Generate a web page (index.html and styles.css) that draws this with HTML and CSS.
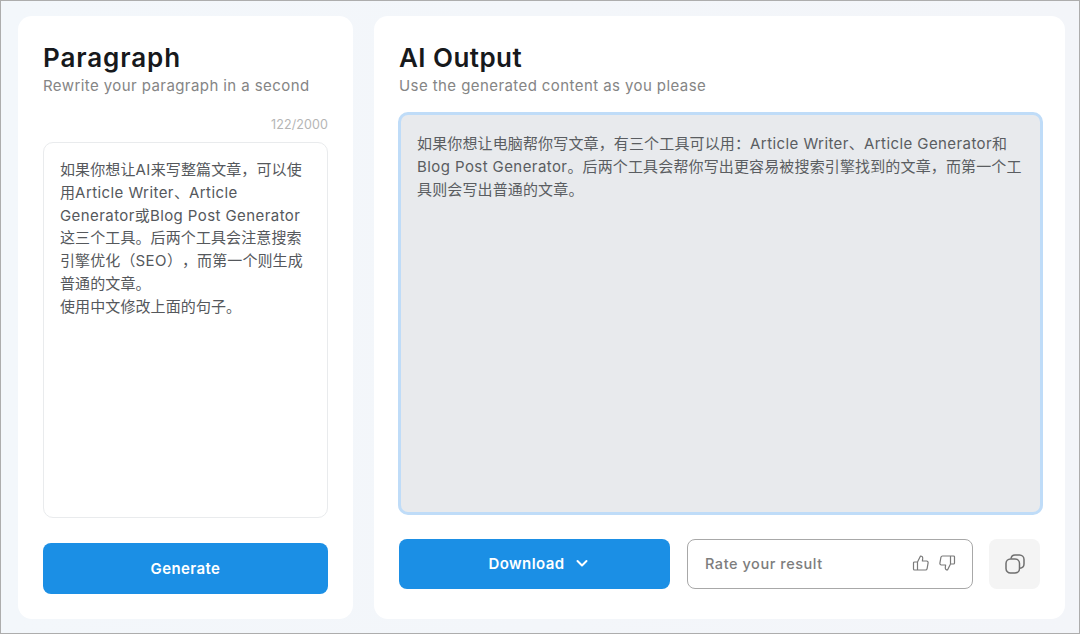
FILE: index.html
```html
<!DOCTYPE html>
<html lang="en">
<head>
<meta charset="utf-8">
<title>Paragraph Rewriter</title>
<link rel="stylesheet" href="styles.css">
</head>
<body>
<main class="frame">
  <section class="card card-left">
    <h1 class="title title-para">Paragraph</h1>
    <p class="subtitle">Rewrite your paragraph in a second</p>
    <div class="count">122/2000</div>
    <div class="input-box">如果你想让<span class="lat">AI</span>来写整篇文章，可以使用<span class="lat">Article Writer</span>、<span class="lat">Article Generator</span>或<span class="lat">Blog Post Generator</span>这三个工具。后两个工具会注意搜索引擎优化（<span class="lat">SEO</span>），而第一个则生成普通的文章。<br>使用中文修改上面的句子。</div>
    <button class="btn btn-generate">Generate</button>
  </section>
  <section class="card card-right">
    <h1 class="title title-output">AI Output</h1>
    <p class="subtitle">Use the generated content as you please</p>
    <div class="output-box">如果你想让电脑帮你写文章，有三个工具可以用：<span class="lat">Article Writer</span>、<span class="lat">Article Generator</span>和<span class="lat">Blog Post Generator</span>。后两个工具会帮你写出更容易被搜索引擎找到的文章，而第一个工具则会写出普通的文章。</div>
    <div class="actions">
      <button class="btn btn-download">Download
        <svg class="chev" width="14" height="14" viewBox="0 0 14 14" fill="none" stroke="#fff" stroke-width="2" stroke-linecap="round" stroke-linejoin="round"><path d="M2.500 5l4.500 4.500L11.500 5"/></svg>
      </button>
      <div class="rate">
        <span class="rate-label">Rate your result</span>
        <span class="rate-icons">
          <svg width="18" height="18" viewBox="0 0 18 18" fill="none" stroke="#7a7a7a" stroke-width="1.200" stroke-linejoin="round"><path d="M5.500 8h-3a1 1 0 0 0-1 1v6a1 1 0 0 0 1 1h3zM5.500 8l3-6c1.500 0 2.300 1 2.200 2.400L10.400 7h4.200a1.500 1.500 0 0 1 1.500 1.800l-1 5.800a1.700 1.700 0 0 1-1.700 1.400H5.500"/></svg>
          <svg width="18" height="18" viewBox="0 0 18 18" fill="none" stroke="#7a7a7a" stroke-width="1.200" stroke-linejoin="round"><path d="M12.500 10h3a1 1 0 0 0 1-1V3a1 1 0 0 0-1-1h-3zM12.500 10l-3 6c-1.500 0-2.300-1-2.200-2.400l.3-2.600H3.400a1.500 1.500 0 0 1-1.500-1.800l1-5.800A1.700 1.700 0 0 1 4.600 2h7.900"/></svg>
        </span>
      </div>
      <button class="btn-copy" aria-label="Copy">
        <svg width="20" height="20" viewBox="0 0 20 20" fill="none" stroke="#6f6f6f" stroke-width="1.500"><rect x="1" y="5" width="13.500" height="14" rx="4.500"/><path d="M6 4.700C6.300 2.500 7.500 1 10 1h4.500C17 1 19 3 19 5.500V10c0 2.300-1.500 4-4.400 4.300"/></svg>
      </button>
    </div>
  </section>
</main>
</body>
</html>
```
FILE: styles.css
```css
* { box-sizing: border-box; }
html, body { margin: 0; padding: 0; }
body {
  width: 1080px;
  height: 634px;
  overflow: hidden;
  font-family: "Inter", "Noto Sans CJK SC", sans-serif;
}
.frame {
  width: 1080px;
  height: 634px;
  display: flex;
  gap: 21px;
  padding: 15px 14px 14px 17px;
  background: linear-gradient(90deg, #f3f7fb, #f3f5f9);
  border: 1px solid #adadad;
}
.card {
  background: #fff;
  border-radius: 14px;
  display: flex;
  flex-direction: column;
  height: 603px;
}
.card-left { width: 335px; padding: 25px; }
.card-right { width: 691px; padding: 25px 25px 30px; }
.title {
  margin: 0;
  font-size: 26px;
  line-height: 33px;
  font-weight: 600;
  color: #17191c;
}
.title-para { letter-spacing: 0.9px; }
.title-output { letter-spacing: 0.45px; }
.subtitle {
  margin: 2px 0 0;
  font-size: 15px;
  line-height: 20px;
  color: #858585;
  letter-spacing: 0.42px;
}
.count {
  margin-top: 21px;
  text-align: right;
  font-size: 12.500px;
  line-height: 16px;
  letter-spacing: 0.1px;
  color: #b5b5b5;
}
.input-box {
  margin-top: 9px;
  height: 376px;
  padding: 16px;
  border: 1px solid #e9ebed;
  border-radius: 10px;
  font-size: 15px;
  line-height: 22.800px;
  letter-spacing: 0.1px;
  text-spacing-trim: space-all;
  color: #55585c;
}
.lat { letter-spacing: 0.42px; }
.btn {
  border: 0;
  background: #1b8fe5;
  color: #fff;
  font: 600 15px "Inter", sans-serif;
  letter-spacing: 0.4px;
  border-radius: 8px;
  cursor: pointer;
}
.btn-generate { height: 51px; margin-top: 25px; width: 285px; }
.output-box {
  margin: 16px 0 0 -1px;
  width: 645px;
  height: 403px;
  padding: 17px 16px;
  background: #e8eaed;
  border: 3px solid #bfdcf8;
  border-radius: 10px;
  font-size: 15px;
  line-height: 23px;
  letter-spacing: 0.14px;
  text-spacing-trim: space-all;
  color: #5a5d61;
}
.actions {
  display: flex;
  margin-top: 24px;
  height: 50px;
}
.btn-download {
  width: 271px;
  padding: 0 0 2px 9px;
  display: flex;
  align-items: center;
  justify-content: center;
  gap: 11px;
}
.rate {
  width: 286px;
  margin-left: 17px;
  border: 1px solid #a8a8a8;
  border-radius: 8px;
  display: flex;
  align-items: center;
  justify-content: space-between;
  padding: 0 16px 2px 17px;
}
.rate-label {
  font-size: 14.500px;
  font-weight: 500;
  letter-spacing: 0.55px;
  color: #7d7d7d;
}
.rate-icons { display: flex; gap: 8px; align-items: center; }
.btn-copy {
  width: 51px;
  margin-left: 16px;
  border: 0;
  border-radius: 8px;
  background: #f4f4f4;
  display: flex;
  align-items: center;
  justify-content: center;
  cursor: pointer;
}
```
